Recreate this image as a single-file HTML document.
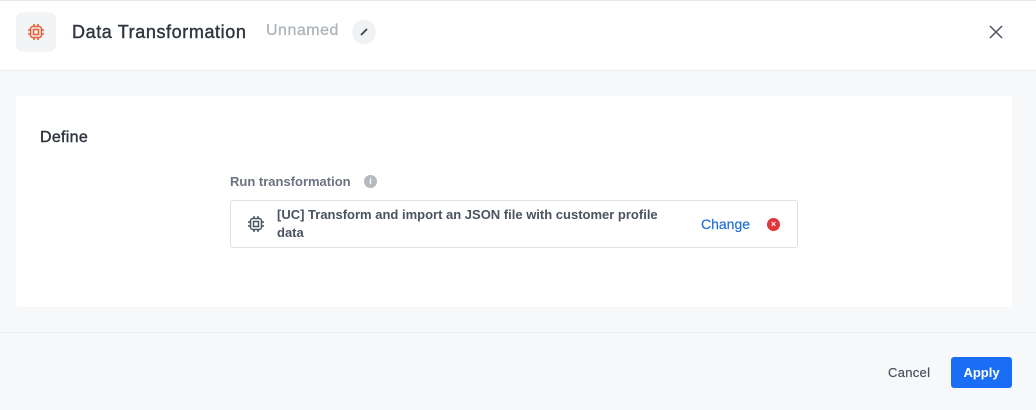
<!DOCTYPE html>
<html><head><style>
*{box-sizing:border-box;margin:0;padding:0}
body{width:1036px;height:410px;background:#f7f8fa;font-family:"Liberation Sans",sans-serif;position:relative;overflow:hidden}
.hdr{position:absolute;left:0;top:0;width:1036px;height:71px;background:#fff;border-top:1px solid #e6e8ec;border-bottom:1px solid #eceef1}
.ic{position:absolute;left:16px;top:11px;width:40px;height:40px;background:#f3f4f6;border-radius:7px;display:flex;align-items:center;justify-content:center}
.title{position:absolute;left:72px;top:21px;font-size:18px;color:#2f353e;letter-spacing:0.6px;-webkit-text-stroke:0.4px #2f353e}
.un{position:absolute;left:266px;top:21px;font-size:16px;color:#aeb3ba;letter-spacing:0.5px;-webkit-text-stroke:0.3px #aeb3ba}
.pen{position:absolute;left:352px;top:19px;width:24px;height:24px;border-radius:50%;background:#f0f1f3;display:flex;align-items:center;justify-content:center}
.x{position:absolute;left:988px;top:23px}
.card{position:absolute;left:16px;top:96px;width:996px;height:211px;background:#fff;border-radius:3px}
.def{position:absolute;left:24px;top:33px;font-size:16px;color:#2f353e;-webkit-text-stroke:0.4px #2f353e;letter-spacing:0.3px}
.lbl{position:absolute;left:214px;top:78px;font-size:13px;font-weight:bold;color:#6b7280}
.info{position:absolute;left:348px;top:79px;width:13px;height:13px;border-radius:50%;background:#b5b9c0;color:#fff;font-size:9px;font-weight:bold;text-align:center;line-height:13px}
.box{position:absolute;left:214px;top:104px;width:568px;height:48px;border:1px solid #dcdfe4;border-radius:3px}
.bt{position:absolute;left:46px;top:5px;font-size:13px;font-weight:bold;color:#4b5360;line-height:18px;width:400px}
.ch{position:absolute;left:470px;top:15px;font-size:14px;color:#1f6fd6;-webkit-text-stroke:0.2px #1f6fd6}
.rx{position:absolute;left:536px;top:17px;width:13px;height:13px;border-radius:50%;background:#e0353b;color:#fff;font-size:9px;text-align:center;line-height:13px;font-weight:bold}
.foot{position:absolute;left:0;top:332px;width:1036px;height:1px;background:#eceef1}
.cancel{position:absolute;left:888px;top:365px;font-size:13px;color:#4b5360;letter-spacing:0.3px;-webkit-text-stroke:0.2px #4b5360}
.apply{position:absolute;left:951px;top:357px;width:61px;height:31px;background:#1a6ef5;border-radius:3px;color:#fff;font-size:13px;font-weight:bold;text-align:center;line-height:31px}
</style></head><body>
<div class="hdr">
<div class="ic"><svg width="18" height="18" viewBox="0 0 18 18" fill="none" stroke="#e4623f" stroke-width="1.6"><rect x="3.5" y="3.5" width="11" height="11" rx="2.5"/><rect x="6.5" y="6.5" width="5" height="5"/><path d="M7 1v2.5M11 1v2.5M7 14.5V17M11 14.5V17M1 7h2.5M1 11h2.5M14.5 7H17M14.5 11H17"/></svg></div>
<div class="title">Data Transformation</div>
<div class="un">Unnamed</div>
<div class="pen"><svg width="10" height="10" viewBox="0 0 10 10"><path d="M2 8L8 2" stroke="#363c45" stroke-width="1.6"/></svg></div>
<svg class="x" width="16" height="16" viewBox="0 0 16 16"><path d="M2 2L14 14M14 2L2 14" stroke="#4b5360" stroke-width="1.5"/></svg>
</div>
<div class="card">
<div class="def">Define</div>
<div class="lbl">Run transformation</div>
<div class="info">i</div>
<div class="box">
<svg style="position:absolute;left:16px;top:14px" width="18" height="18" viewBox="0 0 18 18" fill="none" stroke="#4b5360" stroke-width="1.5"><rect x="3.5" y="3.5" width="11" height="11" rx="2.5"/><rect x="6.5" y="6.5" width="5" height="5"/><path d="M7 1v2.5M11 1v2.5M7 14.5V17M11 14.5V17M1 7h2.5M1 11h2.5M14.5 7H17M14.5 11H17"/></svg>
<div class="bt">[UC] Transform and import an JSON file with customer profile data</div>
<div class="ch">Change</div>
<div class="rx">×</div>
</div>
</div>
<div class="foot"></div>
<div class="cancel">Cancel</div>
<div class="apply">Apply</div>
</body></html>
